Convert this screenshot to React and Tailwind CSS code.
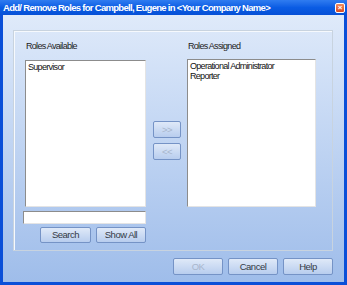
import { useState } from 'react';

const FONT = { fontFamily: '"Liberation Sans", Arial, sans-serif' };

function XpButton({ children, disabled, className = '' }) {
  return (
    <button
      disabled={disabled}
      className={`flex items-center justify-center rounded-[2px] border border-[#7593c6] bg-gradient-to-b from-[#dfe9f8] to-[#b8cdee] text-[9.5px] leading-none tracking-[-0.5px] ${
        disabled ? 'text-[#a8b6cc]' : 'text-[#333a45]'
      } ${className}`}
    >
      {children}
    </button>
  );
}

function ListBox({ items, className = '' }) {
  return (
    <div
      className={`border border-t-[#8c8c8c] border-l-[#8c8c8c] border-b-[#e4e4e4] border-r-[#e4e4e4] bg-white px-[2px] pt-[1px] text-[9px] leading-[10px] tracking-[-0.7px] text-[#111] ${className}`}
    >
      {items.map((item) => (
        <div key={item}>{item}</div>
      ))}
    </div>
  );
}

export default function App() {
  const [search, setSearch] = useState('');

  return (
    <div style={FONT} className="flex h-[285px] w-[347px] flex-col bg-[#0a4fd8]">
      {/* Title bar */}
      <div className="flex h-[15px] items-center justify-between bg-gradient-to-b from-[#2f7cf0] via-[#0a5ce4] to-[#0650d6] pl-[3px] pr-[2px]">
        <span className="text-[9.5px] font-bold leading-none tracking-[-0.7px] text-white">
          Add/ Remove Roles for Campbell, Eugene in &lt;Your Company Name&gt;
        </span>
        <div className="flex h-[10px] w-[10px] items-center justify-center rounded-[2px] border border-white bg-gradient-to-b from-[#f08a5e] to-[#d8481f] text-[8px] font-bold leading-none text-white">
          ×
        </div>
      </div>

      {/* Body */}
      <div className="mx-[3px] mb-[3px] flex flex-1 flex-col bg-gradient-to-b from-[#dfeafa] to-[#9fbdea] pl-[10px] pr-[11px] pt-[15px]">
        {/* Group box */}
        <div className="flex h-[221px] border border-[#c8d3df] pl-[9px] pt-[11px] shadow-[inset_1px_1px_0_#f6f9fd]">
          {/* Available */}
          <div className="flex w-[123px] flex-col">
            <div className="ml-[3px] h-[18px] text-[9px] leading-none tracking-[-0.7px] text-[#222]">Roles Available</div>
            <ListBox items={['Supervisor']} className="ml-[2px] h-[147px] w-[121px]" />
            <input
              value={search}
              onChange={(e) => setSearch(e.target.value)}
              className="mt-[4px] h-[13px] w-[123px] border border-t-[#8c8c8c] border-l-[#8c8c8c] border-b-[#e4e4e4] border-r-[#e4e4e4] bg-white text-[10px] outline-none"
            />
            <div className="mt-[3px] flex justify-end gap-[5px]">
              <XpButton className="h-[16px] w-[51px]">Search</XpButton>
              <XpButton className="h-[16px] w-[50px]">Show All</XpButton>
            </div>
          </div>

          {/* Move buttons */}
          <div className="ml-[7px] flex w-[28px] flex-col gap-[5px] pt-[79px]">
            <XpButton disabled className="h-[17px] w-[28px]">&gt;&gt;</XpButton>
            <XpButton disabled className="h-[17px] w-[28px]">&lt;&lt;</XpButton>
          </div>

          {/* Assigned */}
          <div className="ml-[6px] flex w-[129px] flex-col">
            <div className="ml-[1px] h-[17px] text-[9px] leading-none tracking-[-0.7px] text-[#222]">Roles Assigned</div>
            <ListBox items={['Operational Administrator', 'Reporter']} className="h-[148px] w-[129px]" />
          </div>
        </div>

        {/* Dialog buttons */}
        <div className="mt-[7px] flex justify-end gap-[5px]">
          <XpButton disabled className="h-[17px] w-[50px]">OK</XpButton>
          <XpButton className="h-[17px] w-[50px]">Cancel</XpButton>
          <XpButton className="h-[17px] w-[50px]">Help</XpButton>
        </div>
      </div>
    </div>
  );
}
